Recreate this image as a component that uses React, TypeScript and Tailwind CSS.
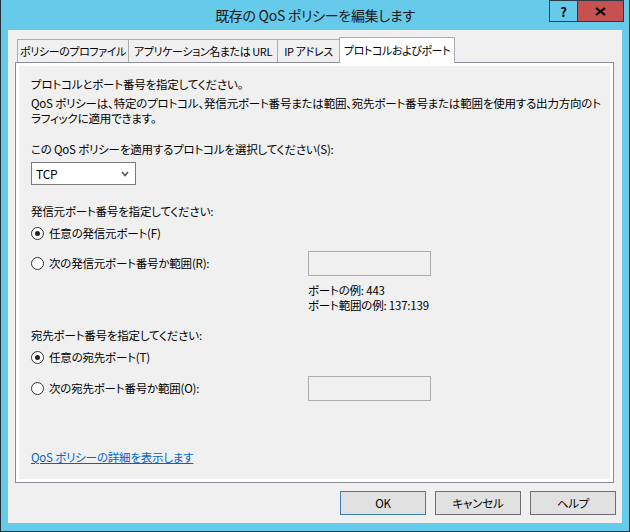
import React from "react";

const font = "font-['Meiryo_UI','Noto_Sans_CJK_JP',sans-serif] [font-feature-settings:'palt']";

// radio circle drawn with css
const Radio = ({ checked }: { checked?: boolean }) => (
  <span className="flex h-[13px] w-[13px] shrink-0 items-center justify-center rounded-full border border-[#333333] bg-white">
    {checked && <span className="h-[5px] w-[5px] rounded-full bg-[#222222]" />}
  </span>
);

const TextBox = () => <div className="h-[25px] w-[123px] border border-[#abadb3] bg-[#f0f0f0]" />;

const Tab = ({ label, width, active }: { label: string; width: string; active?: boolean }) => (
  <div
    className={
      (active
        ? "relative z-10 -mb-px h-[26px] bg-white "
        : "h-[23px] bg-[#f0f0f0] ") +
      "-ml-px flex items-center justify-center border border-b-0 border-[#adadad] text-[11px] tracking-[-0.4px] first:ml-0 " +
      width
    }
  >
    <span className="whitespace-nowrap">{label}</span>
  </div>
);

const Button = ({ label, primary }: { label: string; primary?: boolean }) => (
  <button
    className={
      "flex h-[24px] w-[86px] items-center justify-center bg-[#e1e1e1] " +
      (primary ? "border border-[#3c7fb1]" : "border border-[#707070]")
    }
  >
    {label}
  </button>
);

export default function App() {
  return (
    <div className={`${font} flex h-[532px] w-[630px] flex-col border-x border-b border-[#24343d] bg-[#66cbea] text-[11.5px] leading-[15px] tracking-[-0.2px] text-black`}>
      {/* Title bar */}
      <div className="relative flex h-[30px] shrink-0 items-center justify-center">
        <span className="pt-[1px] text-[14px] tracking-[-0.3px] text-[#1a1a1a]">既存の QoS ポリシーを編集します</span>
        <div className="absolute right-[5px] top-0 flex h-[22px]">
          <div className="flex w-[28px] items-center justify-center border border-r-0 border-[#2b3a42] text-[13px] font-bold">?</div>
          <div className="flex w-[47px] items-center justify-center border border-[#2b3a42] bg-[#c75050] text-[13px] font-bold">
            <svg width="11" height="9" viewBox="0 0 11 9">
              <path d="M1 1 L10 8 M10 1 L1 8" stroke="#000" strokeWidth="2.2" />
            </svg>
          </div>
        </div>
      </div>

      {/* Client area */}
      <div className="mx-[7px] flex h-[493px] flex-col bg-[#f0f0f0] pt-[7px]">
        <div className="flex h-[25px] items-end pl-[9px]">
          <Tab label="ポリシーのプロファイル" width="w-[112px]" />
          <Tab label="アプリケーション名または URL" width="w-[150px]" />
          <Tab label="IP アドレス" width="w-[63px]" />
          <Tab label="プロトコルおよびポート" width="w-[116px]" active />
        </div>

        {/* Tab panel */}
        <div className="ml-[7px] h-[421px] w-[599px] border border-[#898c95] bg-white p-[3px]">
          <div className="flex h-full flex-col bg-[#f0f0f0] pl-[12px] pt-[11px]">
            <p>プロトコルとポート番号を指定してください。</p>
            <p className="mt-[4px] whitespace-nowrap">
              QoS ポリシーは、特定のプロトコル、発信元ポート番号または範囲、宛先ポート番号または範囲を使用する出力方向のト
              <br />
              ラフィックに適用できます。
            </p>
            <p className="mt-[16px]">この QoS ポリシーを適用するプロトコルを選択してください(S):</p>

            <div className="mt-[5px] flex h-[23px] w-[105px] items-center justify-between border border-[#7a7a7a] bg-white pl-[4px] pr-[6px]">
              <span className="text-[12px]">TCP</span>
              <svg width="8" height="6" viewBox="0 0 8 6">
                <path d="M1 1 L4 4.5 L7 1" stroke="#555" strokeWidth="1.6" fill="none" />
              </svg>
            </div>

            <p className="mt-[19px]">発信元ポート番号を指定してください:</p>
            <label className="mt-[7px] flex items-center gap-[5px]">
              <Radio checked />
              <span>任意の発信元ポート(F)</span>
            </label>
            <div className="mt-[10px] flex items-center">
              <label className="flex w-[277px] items-center gap-[5px]">
                <Radio />
                <span>次の発信元ポート番号か範囲(R):</span>
              </label>
              <TextBox />
            </div>
            <div className="ml-[277px] mt-[7px]">
              <p>ポートの例: 443</p>
              <p>ポート範囲の例: 137:139</p>
            </div>

            <p className="mt-[15px]">宛先ポート番号を指定してください:</p>
            <label className="mt-[7px] flex items-center gap-[5px]">
              <Radio checked />
              <span>任意の宛先ポート(T)</span>
            </label>
            <div className="mt-[11px] flex items-center">
              <label className="flex w-[277px] items-center gap-[5px]">
                <Radio />
                <span>次の宛先ポート番号か範囲(O):</span>
              </label>
              <TextBox />
            </div>

            <a href="#" className="mt-[49px] self-start text-[#0066cc] underline">
              QoS ポリシーの詳細を表示します
            </a>
          </div>
        </div>

        {/* Buttons */}
        <div className="mr-[6px] mt-[8px] flex justify-end gap-[9px]">
          <Button label="OK" primary />
          <Button label="キャンセル" />
          <Button label="ヘルプ" />
        </div>
      </div>
    </div>
  );
}
